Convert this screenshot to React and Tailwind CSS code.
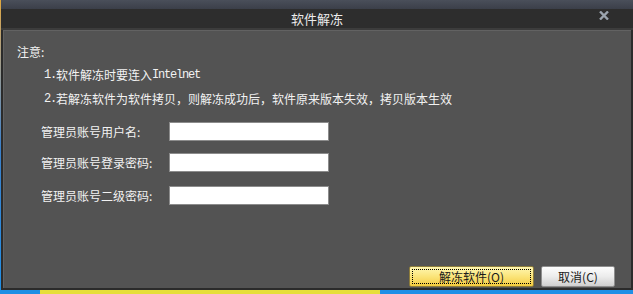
import React from "react";

const cjk = { fontFamily: '"Noto Sans CJK SC", "Noto Sans", sans-serif' };

// half-width latin, like the bitmap font in the original dialog
const Mono = ({ children }) => (
  <span className="font-mono tracking-[-1.2px] leading-none">{children}</span>
);

const Field = ({ label }) => (
  <div className="flex items-center h-[19px]">
    <span className="w-[128px] text-[12px] text-[#f2f2f2] whitespace-nowrap">{label}</span>
    <input
      type="text"
      className="w-[160px] h-[19px] bg-white border border-[#8c8c8c] outline-none"
    />
  </div>
);

const App = () => {
  return (
    <div
      style={cjk}
      className="w-[633px] h-[294px] flex flex-col bg-gradient-to-b from-[#e2a83a] via-[#3a7fc8] to-[#1e8fe6] overflow-hidden"
    >
      <div className="ml-[1px] w-[632px] h-[290px] flex flex-col bg-[#2b2b2b]">
        <div className="h-[9px] bg-gradient-to-b from-[#4a4f5a] to-[#3b3f49] shrink-0" />
        <div className="h-[19px] relative flex items-center justify-center bg-[#2d2d2d] shrink-0">
          <span className="text-[13px] text-[#ececec] leading-none">软件解冻</span>
          <svg
            className="absolute right-[24px] top-[2px]"
            width="10"
            height="9"
            viewBox="0 0 10 9"
          >
            <path d="M1 0.5 L9 8.5 M9 0.5 L1 8.5" stroke="#9ba4ae" strokeWidth="2.4" />
          </svg>
        </div>
        <div className="h-[2px] bg-[#3c3c3c] shrink-0" />
        <div className="flex-1 mx-[2px] mb-[2px] border-l border-t border-[#626262] bg-[#535353] flex flex-col text-[#f2f2f2]">
          <div className="pt-[9px] text-[12px] flex flex-col">
            <div className="h-[23px] flex items-center pl-[13px]">注意:</div>
            <div className="h-[24px] flex items-center pl-[40px] whitespace-pre">
              <Mono>1.</Mono>软件解冻时要连入<Mono>Intelnet</Mono>
            </div>
            <div className="h-[23px] flex items-center pl-[40px] whitespace-pre">
              <Mono>2.</Mono>若解冻软件为软件拷贝，则解冻成功后，软件原来版本失效，拷贝版本生效
            </div>
          </div>
          <div className="pl-[37px] mt-[12px] flex flex-col gap-[12px]">
            <Field label="管理员账号用户名:" />
            <Field label="管理员账号登录密码:" />
            <div className="mt-[2px]">
              <Field label="管理员账号二级密码:" />
            </div>
          </div>
          <div className="mt-auto mb-[1px] mr-[16px] flex justify-end gap-[7px]">
            <button className="w-[125px] h-[21px] p-[2px] rounded-[2px] border border-[#8d7c3c] bg-gradient-to-b from-[#fff7b0] via-[#fbe479] to-[#f4cc3c]">
              <div className="h-full border border-dotted border-black flex items-center justify-center text-[12px] text-[#1a1a1a] leading-none">
                解冻软件(O)
              </div>
            </button>
            <button className="w-[74px] h-[21px] rounded-[2px] border border-[#8e8e8e] bg-gradient-to-b from-[#fdfdfd] via-[#ececec] to-[#cfcfcf] flex items-center justify-center text-[12px] text-[#1a1a1a] leading-none">
              取消(C)
            </button>
          </div>
        </div>
      </div>
      <div className="flex-1 flex">
        <div className="w-[40px] bg-[#1d8fe4]" />
        <div className="w-[340px] bg-[#e6df3a]" />
        <div className="flex-1 bg-[#1f8fe6]" />
      </div>
    </div>
  );
};

export default App;
